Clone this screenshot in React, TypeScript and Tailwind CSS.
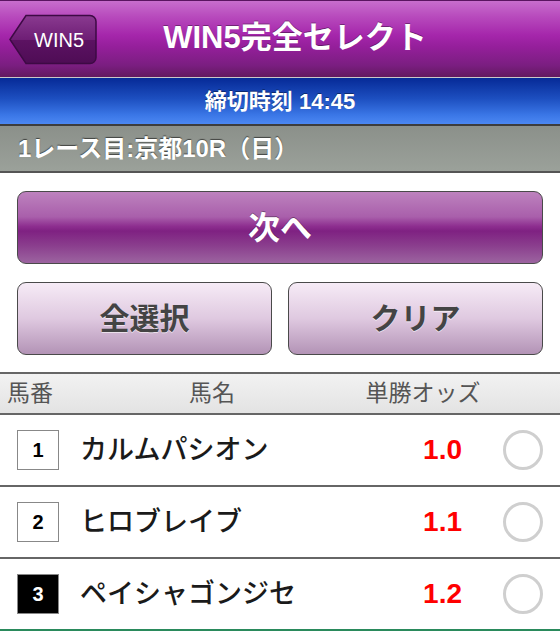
import React from "react";

const FONT = { fontFamily: '"Liberation Sans", "Noto Sans CJK JP", sans-serif' };

const horses = [
  { no: 1, name: "カルムパシオン", odds: "1.0", dark: false },
  { no: 2, name: "ヒロブレイブ", odds: "1.1", dark: false },
  { no: 3, name: "ペイシャゴンジセ", odds: "1.2", dark: true },
];

function BackButton() {
  return (
    <div className="absolute left-[9px] top-[13px] w-[88px] h-[51px]">
      <svg width="88" height="51" viewBox="0 0 88 51" className="absolute inset-0">
        <defs>
          <linearGradient id="bb" x1="0" y1="0" x2="0" y2="1">
            <stop offset="0" stopColor="#8a3a90" />
            <stop offset="0.5" stopColor="#6e1e75" />
            <stop offset="0.52" stopColor="#5c1262" />
            <stop offset="1" stopColor="#4e0c55" />
          </linearGradient>
        </defs>
        <path
          d="M1 25.5 L17 1.5 H81 a6 6 0 0 1 6 6 V43.5 a6 6 0 0 1 -6 6 H17 Z"
          fill="url(#bb)"
          stroke="#3d0a44"
          strokeWidth="1.5"
        />
      </svg>
      <span className="absolute left-[18px] right-0 top-0 bottom-0 flex items-center justify-center text-white text-[20px] pr-[6px]">
        WIN5
      </span>
    </div>
  );
}

export default function App() {
  return (
    <div className="w-[560px] h-[631px] overflow-hidden bg-white" style={FONT}>
      {/* Nav bar */}
      <div className="relative h-[77px] border-t border-[#5a1460] bg-[linear-gradient(to_bottom,#c86ecd_0%,#b84bbd_20%,#a526ab_45%,#951f9b_60%,#7a1e80_85%,#62195f_100%)]">
        <BackButton />
        <div className="h-full flex items-center justify-center pl-[30px] pb-[2px]">
          <span className="text-white font-bold text-[31px] [text-shadow:0_-1px_0_rgba(0,0,0,0.35)]">
            WIN5完全セレクト
          </span>
        </div>
      </div>
      <div className="h-[1px] bg-[#c9c9c9]" />
      {/* Blue bar */}
      <div className="h-[46px] bg-[linear-gradient(to_bottom,#062a97_0%,#1d4fc0_45%,#3a76e6_80%,#4c88f3_100%)] flex items-center justify-center">
        <span className="text-white font-bold text-[22px] [text-shadow:0_-1px_0_rgba(0,0,0,0.4)]">
          締切時刻 14:45
        </span>
      </div>
      <div className="h-[2px] bg-[#3d3d3d]" />
      {/* Gray bar */}
      <div className="h-[45px] bg-[linear-gradient(to_bottom,#8b908a,#9ba19a)] flex items-center pl-[18px]">
        <span className="text-white font-bold text-[24px] [text-shadow:0_-1px_1px_rgba(0,0,0,0.55)]">
          1レース目:京都10R（日）
        </span>
      </div>
      <div className="h-[2px] bg-[#555]" />

      {/* Buttons */}
      <div className="px-[17px] pt-[18px]">
        <div className="h-[73px] rounded-[9px] border-[1.5px] border-[#4a4a4a] bg-[linear-gradient(to_bottom,#bd82be_0%,#a95fab_35%,#8e2f90_48%,#7f2182_55%,#8a3d8d_75%,#9c64a0_100%)] flex items-center justify-center">
          <span className="text-white font-bold text-[32px] [text-shadow:0_-1px_0_rgba(0,0,0,0.35)]">次へ</span>
        </div>
        <div className="flex gap-[16px] mt-[18px]">
          <div className="flex-1 h-[73px] rounded-[9px] border-[1.5px] border-[#4a4a4a] bg-[linear-gradient(to_bottom,#f6ebf6_0%,#dfc9e0_50%,#b393b6_100%)] flex items-center justify-center">
            <span className="text-[#444] font-bold text-[30px] [text-shadow:0_1px_0_rgba(255,255,255,0.6)]">全選択</span>
          </div>
          <div className="flex-1 h-[73px] rounded-[9px] border-[1.5px] border-[#4a4a4a] bg-[linear-gradient(to_bottom,#f6ebf6_0%,#dfc9e0_50%,#b393b6_100%)] flex items-center justify-center">
            <span className="text-[#444] font-bold text-[30px] [text-shadow:0_1px_0_rgba(255,255,255,0.6)]">クリア</span>
          </div>
        </div>
      </div>

      {/* Table */}
      <div className="mt-[17px] border-t-2 border-[#666]">
        <div className="h-[41px] bg-[linear-gradient(to_bottom,#f2f2f2,#e3e3e3)] flex items-center text-[#555] text-[23px] border-b-2 border-[#666]">
          <div className="w-[100px] pl-[7px]">馬番</div>
          <div className="w-[224px] text-center">馬名</div>
          <div className="w-[198px] text-center">単勝オッズ</div>
        </div>
        {horses.map((h, i) => (
          <div
            key={h.no}
            className={
              i === horses.length - 1
                ? "h-[72px] flex items-center pl-[17px] pr-[17px] border-b-2 border-[#2a8a5c]"
                : "h-[72px] flex items-center pl-[17px] pr-[17px] border-b-2 border-[#666]"
            }
          >
            <div
              className={
                h.dark
                  ? "w-[42px] h-[40px] bg-black border border-[#888] flex items-center justify-center text-white font-bold text-[20px]"
                  : "w-[42px] h-[40px] bg-white border border-[#888] flex items-center justify-center text-black font-bold text-[20px]"
              }
            >
              {h.no}
            </div>
            <div className="flex-1 ml-[21px] text-[#1a1a1a] font-medium text-[27px]">{h.name}</div>
            <div className="text-[#ff0000] font-bold text-[28px]">{h.odds}</div>
            <div className="ml-[41px] w-[40px] h-[40px] rounded-full border-[3px] border-[#cfcfcf]" />
          </div>
        ))}
      </div>
    </div>
  );
}
